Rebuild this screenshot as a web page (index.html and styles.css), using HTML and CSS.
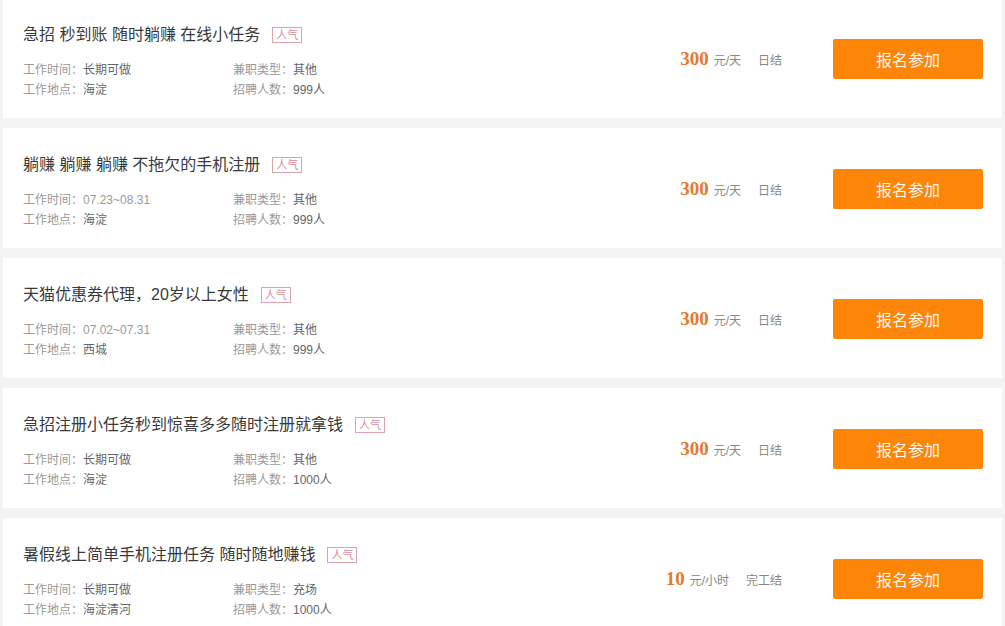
FILE: index.html
```html
<!DOCTYPE html>
<html lang="zh-CN">
<head>
    <meta charset="UTF-8">
    <meta name="viewport" content="width=device-width, initial-scale=1.0">
    <title>兼职列表</title>
    <link rel="stylesheet" href="styles.css">
</head>
<body>
    <div class="job-list">
        <div class="job-card">
            <div class="job-info">
                <h2 class="job-title">急招 秒到账 随时躺赚 在线小任务<span class="tag">人气</span></h2>
                <div class="job-meta">
                    <p><span class="label">工作时间：</span>长期可做</p>
                    <p><span class="label">兼职类型：</span>其他</p>
                    <p><span class="label">工作地点：</span>海淀</p>
                    <p><span class="label">招聘人数：</span>999人</p>
                </div>
            </div>
            <div class="job-pay">
                <span class="price">300</span><span class="unit">元/天</span><span class="settle">日结</span>
            </div>
            <button class="btn-apply">报名参加</button>
        </div>

        <div class="job-card">
            <div class="job-info">
                <h2 class="job-title">躺赚 躺赚 躺赚 不拖欠的手机注册<span class="tag">人气</span></h2>
                <div class="job-meta">
                    <p><span class="label">工作时间：</span><span class="date">07.23~08.31</span></p>
                    <p><span class="label">兼职类型：</span>其他</p>
                    <p><span class="label">工作地点：</span>海淀</p>
                    <p><span class="label">招聘人数：</span>999人</p>
                </div>
            </div>
            <div class="job-pay">
                <span class="price">300</span><span class="unit">元/天</span><span class="settle">日结</span>
            </div>
            <button class="btn-apply">报名参加</button>
        </div>

        <div class="job-card">
            <div class="job-info">
                <h2 class="job-title">天猫优惠券代理，20岁以上女性<span class="tag">人气</span></h2>
                <div class="job-meta">
                    <p><span class="label">工作时间：</span><span class="date">07.02~07.31</span></p>
                    <p><span class="label">兼职类型：</span>其他</p>
                    <p><span class="label">工作地点：</span>西城</p>
                    <p><span class="label">招聘人数：</span>999人</p>
                </div>
            </div>
            <div class="job-pay">
                <span class="price">300</span><span class="unit">元/天</span><span class="settle">日结</span>
            </div>
            <button class="btn-apply">报名参加</button>
        </div>

        <div class="job-card">
            <div class="job-info">
                <h2 class="job-title">急招注册小任务秒到惊喜多多随时注册就拿钱<span class="tag">人气</span></h2>
                <div class="job-meta">
                    <p><span class="label">工作时间：</span>长期可做</p>
                    <p><span class="label">兼职类型：</span>其他</p>
                    <p><span class="label">工作地点：</span>海淀</p>
                    <p><span class="label">招聘人数：</span>1000人</p>
                </div>
            </div>
            <div class="job-pay">
                <span class="price">300</span><span class="unit">元/天</span><span class="settle">日结</span>
            </div>
            <button class="btn-apply">报名参加</button>
        </div>

        <div class="job-card">
            <div class="job-info">
                <h2 class="job-title">暑假线上简单手机注册任务 随时随地赚钱<span class="tag">人气</span></h2>
                <div class="job-meta">
                    <p><span class="label">工作时间：</span>长期可做</p>
                    <p><span class="label">兼职类型：</span>充场</p>
                    <p><span class="label">工作地点：</span>海淀清河</p>
                    <p><span class="label">招聘人数：</span>1000人</p>
                </div>
            </div>
            <div class="job-pay">
                <span class="price">10</span><span class="unit">元/小时</span><span class="settle">完工结</span>
            </div>
            <button class="btn-apply">报名参加</button>
        </div>
    </div>
</body>
</html>
```

FILE: styles.css
```css
body {
    margin: 0;
    background: #f3f2f5;
    font-family: "Liberation Sans", "Noto Sans CJK SC", sans-serif;
    color: #333;
    overflow: hidden;
}

.job-list {
    margin-top: -2px;
    padding: 0 3px;
    display: flex;
    flex-direction: column;
    gap: 10px;
}

.job-card {
    background: #fff;
    height: 120px;
    box-sizing: border-box;
    padding: 0 19px 0 20px;
    display: flex;
    align-items: center;
}

.job-info {
    flex: 1;
    align-self: flex-start;
    padding-top: 27px;
}

.job-title {
    margin: 0 0 15px;
    font-size: 16px;
    font-weight: normal;
    line-height: 20px;
    color: #3a3a3a;
    display: flex;
    align-items: center;
}

.tag {
    margin-left: 12px;
    border: 1px solid #dda3ab;
    color: #d98e99;
    font-size: 11px;
    line-height: 14px;
    padding: 0 3px;
}

.job-meta {
    display: grid;
    grid-template-columns: 210px auto;
}

.job-meta p {
    margin: 0;
    font-size: 12px;
    line-height: 20px;
    color: #666;
}

.job-meta .label {
    color: #999;
}

.job-meta .date {
    color: #999;
}

.job-pay {
    display: flex;
    align-items: baseline;
    margin-top: 2px;
}

.price {
    font-family: "Liberation Serif", serif;
    font-weight: bold;
    font-size: 19px;
    color: #e8782e;
}

.unit {
    margin-left: 5px;
    font-size: 12px;
    color: #888;
}

.settle {
    margin-left: 17px;
    font-size: 12px;
    color: #888;
}

.btn-apply {
    margin-left: 51px;
    margin-top: 2px;
    width: 150px;
    height: 40px;
    border: none;
    border-radius: 2px;
    background: #fd8508;
    color: #fff8ec;
    font-family: "Noto Sans CJK SC", sans-serif;
    font-size: 16px;
    cursor: pointer;
}
```
